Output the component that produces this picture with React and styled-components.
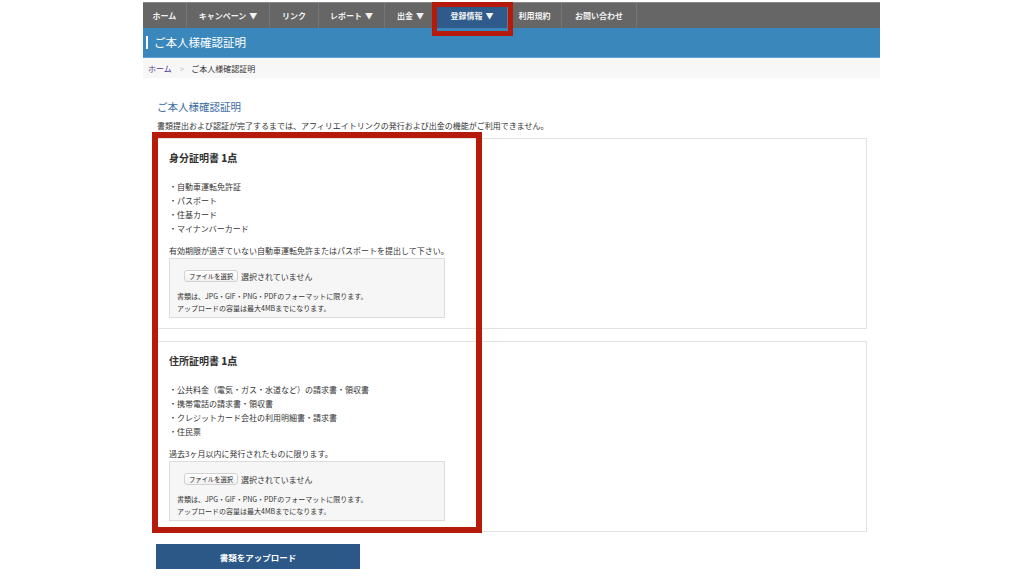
import React from 'react';
import styled, { createGlobalStyle } from 'styled-components';

const GlobalStyle = createGlobalStyle`
  body {
    margin: 0;
    background: #ffffff;
    font-family: "Noto Sans CJK JP", "Liberation Sans", sans-serif;
    color: #333333;
  }
  *, *::before, *::after {
    box-sizing: border-box;
  }
`;

const navItems = [
  { label: 'ホーム', width: 44 },
  { label: 'キャンペーン', width: 83, arrow: true },
  { label: 'リンク', width: 49 },
  { label: 'レポート', width: 66, arrow: true },
  { label: '出金', width: 52, arrow: true },
  { label: '登録情報', width: 71, arrow: true, active: true },
  { label: '利用規約', width: 54 },
  { label: 'お問い合わせ', width: 75 },
];

const sections = [
  {
    title: '身分証明書',
    items: ['自動車運転免許証', 'パスポート', '住基カード', 'マイナンバーカード'],
    note: '有効期限が過ぎていない自動車運転免許またはパスポートを提出して下さい。',
  },
  {
    title: '住所証明書',
    items: [
      '公共料金（電気・ガス・水道など）の請求書・領収書',
      '携帯電話の請求書・領収書',
      'クレジットカード会社の利用明細書・請求書',
      '住民票',
    ],
    note: '過去3ヶ月以内に発行されたものに限ります。',
  },
];

const App = () => {
  return (
    <>
      <GlobalStyle />
      <Wrapper>
        <NavBar>
          {navItems.map((item) => (
            <NavItem key={item.label} $width={item.width} $active={item.active}>
              {item.label}
              {item.arrow && <Arrow>▼</Arrow>}
            </NavItem>
          ))}
        </NavBar>
        <TitleBar>
          <span>ご本人様確認証明</span>
        </TitleBar>
        <Breadcrumb>
          <a href="#">ホーム</a>
          <span className="sep">&gt;</span>
          <span>ご本人様確認証明</span>
        </Breadcrumb>

        <Content>
          <Heading>ご本人様確認証明</Heading>
          <Lead>
            書類提出および認証が完了するまでは、アフィリエイトリンクの発行および出金の機能がご利用できません。
          </Lead>

          <CardList>
            {sections.map((sec) => (
              <Card key={sec.title}>
                <CardTitle>
                  {sec.title} <b>1点</b>
                </CardTitle>
                <DocList>
                  {sec.items.map((it) => (
                    <li key={it}>・{it}</li>
                  ))}
                </DocList>
                <Note>{sec.note}</Note>
                <FileBox>
                  <FileRow>
                    <FileButton type="button">ファイルを選択</FileButton>
                    <span>選択されていません</span>
                  </FileRow>
                  <FileHint>書類は、JPG・GIF・PNG・PDFのフォーマットに限ります。</FileHint>
                  <FileHint>アップロードの容量は最大4MBまでになります。</FileHint>
                </FileBox>
              </Card>
            ))}
          </CardList>

          <UploadButton type="button">書類をアップロード</UploadButton>
        </Content>
      </Wrapper>
    </>
  );
};

const Wrapper = styled.div`
  width: 737px;
  margin: 2px 0 0 143px;
`;

// nav
const NavBar = styled.nav`
  display: flex;
  height: 26px;
  background-color: #666666;
  border-top: 1px solid #8a8a8a;
`;

const NavItem = styled.div`
  position: relative;
  width: ${(p) => p.$width}px;
  display: flex;
  align-items: center;
  justify-content: center;
  font-size: 8px;
  font-weight: bold;
  color: #f2f2f2;
  border-right: 1px solid #767676;
  background-color: ${(p) => (p.$active ? '#2e5b8b' : 'transparent')};
  white-space: nowrap;

  ${(p) =>
    p.$active &&
    `
    &::after {
      content: '';
      position: absolute;
      top: -1px;
      left: -5px;
      right: -6px;
      bottom: -8px;
      border: 5px solid #b51a0b;
      z-index: 2;
    }
  `}
`;

const Arrow = styled.span`
  margin-left: 3px;
  font-size: 8px;
`;

// title
const TitleBar = styled.div`
  height: 30px;
  background-color: #3a87bb;
  border-bottom: 1px solid #5ea3d3;
  display: flex;
  align-items: center;
  padding-left: 3px;
  span {
    border-left: 2px solid #ffffff;
    padding-left: 6px;
    font-size: 11.5px;
    line-height: 13px;
    color: #ffffff;
  }
`;

const Breadcrumb = styled.div`
  height: 20px;
  background-color: #f7f7f7;
  display: flex;
  align-items: center;
  padding-left: 5px;
  font-size: 8px;
  color: #333333;
  a {
    color: #55398a;
    text-decoration: none;
  }
  .sep {
    color: #bbbbbb;
    margin: 0 7px 0 8px;
  }
`;

// content
const Content = styled.div`
  padding: 22px 13px 20px 14px;
`;

const Heading = styled.h2`
  margin: 0 0 5px;
  font-size: 10.5px;
  line-height: 14px;
  font-weight: normal;
  color: #3b6ca3;
`;

const Lead = styled.p`
  margin: 0 0 5px;
  font-size: 8px;
  line-height: 14px;
`;

const CardList = styled.div`
  position: relative;
  display: flex;
  flex-direction: column;
  gap: 12px;

  &::after {
    content: '';
    position: absolute;
    top: -6px;
    left: -5px;
    width: 330px;
    bottom: -1px;
    border: 6px solid #b51a0b;
    pointer-events: none;
  }
`;

const Card = styled.section`
  border: 1px solid #e2e2e2;
  background-color: #ffffff;
  padding: 12px 11px 10px;
`;

const CardTitle = styled.h3`
  margin: 0 0 15px;
  font-size: 10px;
  line-height: 14px;
  font-weight: bold;
  color: #333333;
`;

const DocList = styled.ul`
  list-style: none;
  margin: 0 0 8px;
  padding: 0;
  li {
    font-size: 8px;
    line-height: 14px;
  }
`;

const Note = styled.p`
  margin: 0;
  font-size: 8px;
  line-height: 14px;
`;

const FileBox = styled.div`
  width: 276px;
  height: 60px;
  background-color: #f6f6f6;
  border: 1px solid #dcdcdc;
  padding: 10px 7px 0;
`;

const FileRow = styled.div`
  display: flex;
  align-items: center;
  height: 14px;
  margin: 0 0 7px 7px;
  gap: 3px;
  span {
    font-size: 8px;
  }
`;

const FileButton = styled.button`
  width: 54px;
  height: 12px;
  padding: 0;
  font-family: inherit;
  font-size: 6.3px;
  color: #222222;
  background: linear-gradient(#ffffff, #f0f0f0);
  border: 1px solid #d2d2d2;
  border-radius: 3px;
`;

const FileHint = styled.p`
  margin: 0;
  font-size: 7px;
  line-height: 12px;
`;

const UploadButton = styled.button`
  display: block;
  margin: 12px 0 0 -1px;
  width: 204px;
  height: 25px;
  background-color: #2b5887;
  border: none;
  color: #ffffff;
  font-family: inherit;
  font-size: 8.5px;
  font-weight: bold;
`;

export default App;
